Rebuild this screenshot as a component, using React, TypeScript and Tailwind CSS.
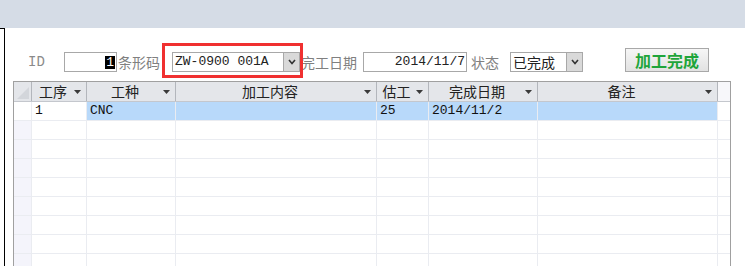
import React from "react";

const cjk = "font-['Noto_Sans_CJK_SC',sans-serif]";
const mono = "font-['Liberation_Mono','Noto_Sans_CJK_SC',monospace]";

const Chevron = () => (
  <svg width="8" height="6" viewBox="0 0 8 6">
    <polyline points="1,1 4,4.5 7,1" fill="none" stroke="#333" strokeWidth="1.6" />
  </svg>
);

const DropButton = () => (
  <div className="flex h-full w-[16px] shrink-0 items-center justify-center border-l border-[#a8a8a8] bg-[#d9d9d9]">
    <Chevron />
  </div>
);

const SortArrow = () => (
  <svg width="7" height="4" viewBox="0 0 7 4" className="shrink-0">
    <polygon points="0,0 7,0 3.5,4" fill="#3a3a3a" />
  </svg>
);

const columns = [
  { title: "工序", w: "w-[55px]" },
  { title: "工种", w: "w-[89px]" },
  { title: "加工内容", w: "w-[201px]" },
  { title: "估工", w: "w-[52px]" },
  { title: "完成日期", w: "w-[109px]" },
  { title: "备注", w: "w-[180px]" },
];

const dataRow = ["1", "CNC", "", "25", "2014/11/2", ""];

const FormRow = () => {
  return (
    <div className="mt-[20px] flex h-[24px] items-end pl-[23px]">
      <div className={`${mono} flex h-[20px] w-[36px] items-center text-[14px] text-[#8a8a8a]`}>ID</div>
      <div className="flex h-[20px] w-[53px] items-center justify-end border border-[#a8a8a8] pr-[1px]">
        <span className={`${mono} bg-black px-[1px] text-[13px] leading-[13px] text-white`}>1</span>
      </div>
      <div className={`${cjk} flex h-[20px] w-[55px] items-center pl-[1px] text-[14px] text-[#808080]`}>条形码</div>
      <div className="relative h-[20px] w-[128px]">
        <div className="flex h-full w-full items-center border border-[#a8a8a8] bg-white">
          <span className={`${mono} flex-1 pl-[2px] text-[13px] text-[#222]`}>ZW-0900 001A</span>
          <DropButton />
        </div>
        <div className="pointer-events-none absolute -top-[9px] -bottom-[6px] -left-[10px] -right-[3px] border-[3px] border-[#f03030]" />
      </div>
      <div className={`${cjk} flex h-[20px] w-[63px] items-center pl-[1px] text-[14px] text-[#808080]`}>完工日期</div>
      <div className="flex h-[20px] w-[104px] items-center justify-end border border-[#a8a8a8] pr-[1px]">
        <span className={`${mono} text-[13px] text-[#222]`}>2014/11/7</span>
      </div>
      <div className={`${cjk} ml-[4px] flex h-[20px] w-[39px] items-center text-[14px] text-[#808080]`}>状态</div>
      <div className="flex h-[20px] w-[73px] items-center border border-[#a8a8a8] bg-white">
        <span className={`${cjk} flex-1 pl-[2px] text-[14px] text-[#222]`}>已完成</span>
        <DropButton />
      </div>
      <button
        className={`${cjk} ml-[42px] flex h-[24px] w-[84px] items-center justify-center border border-[#a8a8a8] bg-gradient-to-b from-[#f6f6f6] to-[#e2e2e2] text-[16px] font-bold text-[#1fa53a]`}
      >
        加工完成
      </button>
    </div>
  );
};

const HeaderRow = () => (
  <div className="flex h-[20px] border-b border-[#c4c7cd] bg-[#e4e6ea]">
    <div className="flex w-[18px] items-end justify-end border-r border-[#b3b6bc] pb-[2px] pr-[2px]">
      <svg width="12" height="12" viewBox="0 0 12 12">
        <polygon points="12,0 12,12 0,12" fill="#d3d6db" />
      </svg>
    </div>
    {columns.map((c) => (
      <div key={c.title} className={`${c.w} flex items-center border-r border-[#b3b6bc] pr-[5px]`}>
        <span className={`${cjk} flex-1 text-center text-[14px] leading-[19px] text-[#222]`}>{c.title}</span>
        <SortArrow />
      </div>
    ))}
    <div className="flex-1 bg-[#f7f7fa]" />
  </div>
);

const BodyRow = ({ values }: { values?: string[] }) => (
  <div className="flex h-[19px] border-b border-[#eaecf1]">
    <div className={`w-[18px] border-r border-[#eaecf1] ${values ? "bg-white" : "bg-[#f4f4fb]"}`} />
    {columns.map((c, i) => (
      <div
        key={c.title}
        className={`${c.w} flex items-center border-r border-[#eaecf1] pl-[3px] ${
          values && i > 0 ? "bg-[#b8d9fa]" : "bg-white"
        }`}
      >
        {values && (
          <span className={`${mono} text-[13px] leading-[18px] text-[#111]`}>{values[i]}</span>
        )}
      </div>
    ))}
    <div className="flex-1 bg-white" />
  </div>
);

const App = () => {
  return (
    <div className="flex h-[266px] w-[745px] flex-col overflow-hidden bg-white">
      <div className="h-[28px] shrink-0 bg-[#d5dce6]" />
      <div className="flex min-h-0 flex-1">
        <div className="w-[5px] shrink-0 border-t border-r border-black" />
        <div className="flex flex-1 flex-col">
          <FormRow />
          <div className="ml-[8px] mt-[9px] w-[718px] border-x border-t border-[#a0a0a0]">
            <HeaderRow />
            <BodyRow values={dataRow} />
            {Array.from({ length: 8 }).map((_, i) => (
              <BodyRow key={i} />
            ))}
          </div>
        </div>
      </div>
    </div>
  );
};

export default App;
